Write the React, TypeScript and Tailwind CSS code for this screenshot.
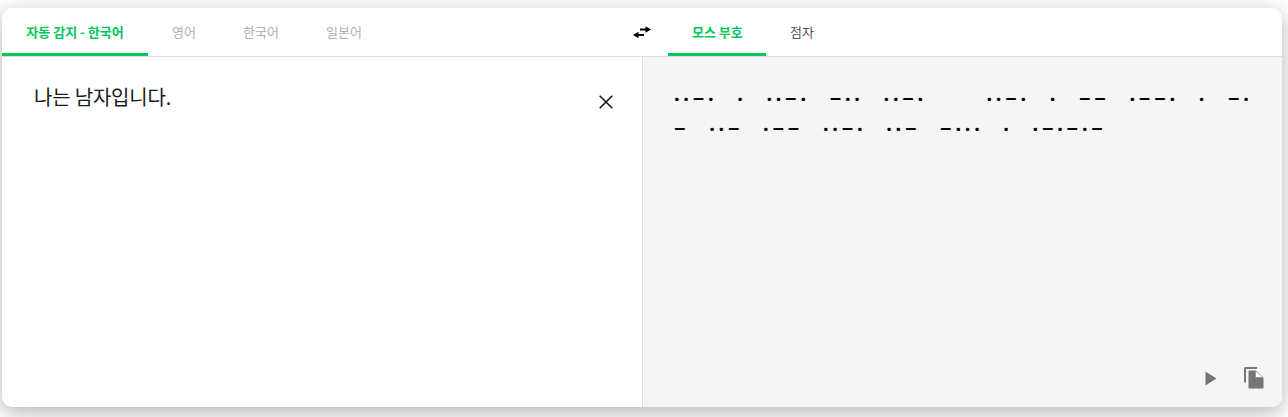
const cjk = "font-['Noto_Sans_CJK_KR','Noto_Sans',sans-serif]";

function Tab({ label, active, muted, w }: { label: string; active?: boolean; muted?: boolean; w: string }) {
  return (
    <button
      className={
        "h-full px-6 border-b-[3px] text-[13px] leading-[17px] pt-[1px] whitespace-nowrap " + w + " " +
        (active
          ? "border-[#03c75a] text-[#03c75a] font-bold"
          : muted
          ? "border-transparent text-[#b0b0b0]"
          : "border-transparent text-[#555555]")
      }
    >
      {label}
    </button>
  );
}

export default function App() {
  return (
    <div className={"w-[1288px] h-[417px] bg-white overflow-hidden pt-2 pl-[2px] " + cjk}>
      <div className="w-[1280px] h-[399px] bg-white rounded-[10px] shadow-[0_5px_20px_rgba(0,0,0,0.3)] flex flex-col overflow-hidden">
        <div className="h-[49px] border-b border-[#dddddd] flex shrink-0">
          <div className="w-[640px] flex h-[48px] items-stretch">
            <Tab label="자동 감지 - 한국어" active w="w-[146px]" />
            <Tab label="영어" muted w="w-[71px]" />
            <Tab label="한국어" muted w="w-[83px]" />
            <Tab label="일본어" muted w="w-[84px]" />
          </div>
          <div className="w-[640px] flex h-[48px] items-stretch pl-[26px] relative">
            <svg className="absolute left-[-10px] top-[14px]" width="20" height="20" viewBox="0 0 20 20" fill="none">
              <path d="M8 7.5H15" stroke="#000" strokeWidth="2" />
              <path d="M13.5 4.2L19 7.5L13.5 10.8Z" fill="#000" />
              <path d="M12 13H5" stroke="#000" strokeWidth="2" />
              <path d="M6.5 9.7L1 13L6.5 16.3Z" fill="#000" />
            </svg>
            <Tab label="모스 부호" active w="w-[98px]" />
            <Tab label="점자" w="w-[72px]" />
          </div>
        </div>
        <div className="flex-1 flex min-h-0">
          <div className="w-[640px] pl-8 pr-[29px] pt-[25px] flex justify-between items-start">
            <p className="text-[20px] leading-[30px] tracking-[-0.2px] text-[#1a1a1a]">나는 남자입니다.</p>
            <svg className="mt-[13px]" width="14" height="14" viewBox="0 0 14 14" fill="none">
              <path d="M0.7 0.7L13.3 13.3M13.3 0.7L0.7 13.3" stroke="#111" strokeWidth="1.5" />
            </svg>
          </div>
          <div className="w-[640px] bg-[#f5f5f5] border-l border-[#dddddd] pl-[31px] pr-[18px] pt-[27px] flex flex-col justify-between pb-[18px]">
            <p className="pr-[6px] text-[20px] leading-[30px] text-black font-bold font-['Noto_Sans',sans-serif] tracking-[3.72px] [word-spacing:10.95px] whitespace-pre-wrap">
              {"··−· · ··−· −·· ··−·   ··−· · −− ·−−· · −· − ··− ·−− ··−· ··− −··· · ·−·−·−"}
            </p>
            <div className="flex justify-end items-center gap-[27px]">
              <svg width="12" height="15" viewBox="0 0 12 15"><path d="M0.5 0.5L11.5 7.5L0.5 14.5Z" fill="#767676" /></svg>
              <svg width="20" height="22" viewBox="0 0 20 22">
                <path d="M1.5 0H13V2H2V15.5H0V1.5Q0 0 1.5 0Z" fill="#767676" />
                <path d="M5.5 3.5H11.5L19.5 11V20.5Q19.5 21.5 18.5 21.5H5.5Q4.5 21.5 4.5 20.5V4.5Q4.5 3.5 5.5 3.5Z" fill="#767676" />
                <path d="M11.5 3.5V10.5H19Z" fill="#ffffff" stroke="#767676" strokeWidth="0.5" />
              </svg>
            </div>
          </div>
        </div>
      </div>
    </div>
  );
}
